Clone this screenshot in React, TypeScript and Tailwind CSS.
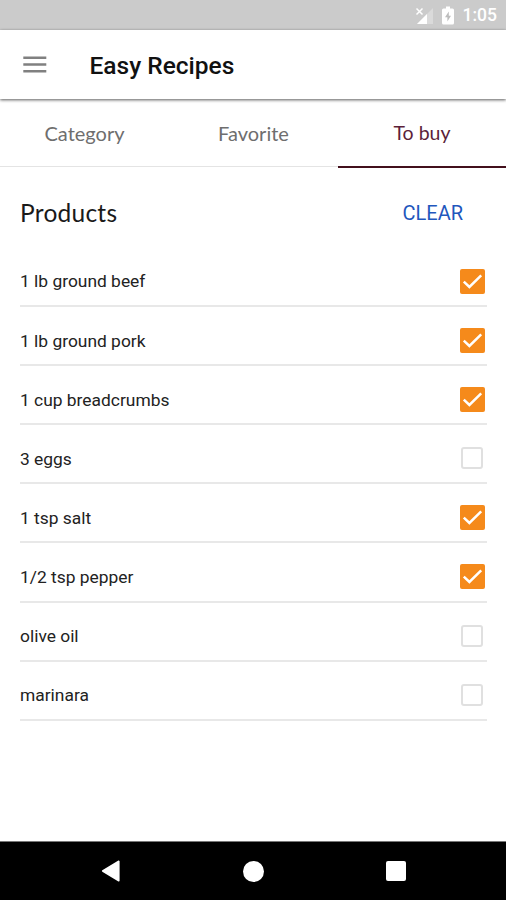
import { useState } from "react";

type Product = { name: string; checked: boolean };

const TABS = ["Category", "Favorite", "To buy"];

const PRODUCTS: Product[] = [
  { name: "1 lb ground beef", checked: true },
  { name: "1 lb ground pork", checked: true },
  { name: "1 cup breadcrumbs", checked: true },
  { name: "3 eggs", checked: false },
  { name: "1 tsp salt", checked: true },
  { name: "1/2 tsp pepper", checked: true },
  { name: "olive oil", checked: false },
  { name: "marinara", checked: false },
];

function StatusBar() {
  return (
    <div className="flex h-[30px] shrink-0 items-center justify-end bg-[#cbcbcb] pt-px pr-[9px] text-white">
      <svg width="19" height="18" viewBox="0 0 19 18" className="mr-2">
        <path d="M18 1V17H2Z" fill="currentColor" opacity="0.3" />
        <path d="M12 7V17H2Z" fill="currentColor" />
        <path d="M1.5 1.5L7.5 7.5M7.5 1.5L1.5 7.5" stroke="currentColor" strokeWidth="1.5" />
      </svg>
      <svg width="12" height="19" viewBox="0 0 12 19" className="mr-[9px]">
        <path d="M4 0.5H8V2.5H10.5Q12 2.5 12 4V17Q12 18.5 10.5 18.5H1.5Q0 18.5 0 17V4Q0 2.5 1.5 2.5H4Z" fill="currentColor" />
        <path d="M6.8 5.5L3 11.3H5.4V15.5L9 9.7H6.8Z" fill="#bdbdbd" />
      </svg>
      <span className="text-[17.5px] leading-[29px] font-medium">1:05</span>
    </div>
  );
}

function Checkbox({ checked }: { checked: boolean }) {
  if (!checked) {
    return <span className="mr-[2px] block h-[22px] w-[22px] rounded-[3px] border-2 border-[#e0e0e0]" />;
  }
  return (
    <span className="block h-[25px] w-[25px] rounded-[2px] bg-[#f58a1b]">
      <svg width="25" height="25" viewBox="0 0 25 25" fill="none">
        <path d="M3.8 12.6L9.4 18L21.2 6.3" stroke="white" strokeWidth="2.5" />
      </svg>
    </span>
  );
}

export default function App() {
  const [products, setProducts] = useState(PRODUCTS);

  const toggle = (index: number) =>
    setProducts((list) => list.map((p, i) => (i === index ? { ...p, checked: !p.checked } : p)));

  return (
    <div className="flex h-[900px] w-[506px] flex-col overflow-hidden bg-white font-['Roboto',sans-serif]">
      <StatusBar />

      {/* App bar */}
      <header className="z-10 flex h-[69px] shrink-0 items-center bg-white pl-[23px] shadow-[0_1px_3px_rgba(0,0,0,0.65)]">
        <button aria-label="Menu">
          <svg width="24" height="17" viewBox="0 0 24 17" className="mb-px">
            <path d="M0.3 1.7H23.3M0.3 8.5H23.3M0.3 15.3H23.3" stroke="#808080" strokeWidth="2.4" />
          </svg>
        </button>
        <h1 className="ml-[42.5px] pt-[2px] text-[24.5px] leading-8 font-medium text-[#111]">Easy Recipes</h1>
      </header>

      {/* Tabs */}
      <nav className="grid h-[69px] shrink-0 grid-cols-[169px_169px_168px] font-['Lato',sans-serif] text-xl">
        {TABS.map((tab) => (
          <button
            key={tab}
            className={
              tab === "To buy"
                ? "border-b-2 border-[#43101c] pt-px text-[19.5px] text-[#5c1f3a]"
                : "mb-px border-b-[1.5px] border-[#e4e4e4] text-[#6e6e6e]"
            }
          >
            {tab}
          </button>
        ))}
      </nav>

      <main className="flex-1 pr-[19px] pl-5">
        <div className="flex h-20 items-center justify-between pt-[10px] pr-6">
          <h2 className="pb-px font-['Lato',sans-serif] text-[24.5px] leading-8 tracking-[0.25px] text-[#1a1a1a]">Products</h2>
          <button
            className="text-xl text-[#1f57bd]"
            onClick={() => setProducts((list) => list.filter((p) => !p.checked))}
          >
            CLEAR
          </button>
        </div>

        <ul>
          {products.map((p, i) => (
            <li
              key={p.name}
              className="flex h-[59.1px] items-center justify-between border-b-2 border-[#e8e8e8] pt-[9px] pr-[2px]"
              onClick={() => toggle(i)}
            >
              <span className="pt-px text-[17.4px] text-[#222]">{p.name}</span>
              <Checkbox checked={p.checked} />
            </li>
          ))}
        </ul>
      </main>

      {/* System navigation */}
      <footer className="flex h-[59px] shrink-0 items-center justify-between border-t border-[#777] bg-black pr-[100px] pl-[101px]">
        <svg width="19" height="22" viewBox="0 0 19 22" fill="white">
          <path d="M17.8 1.3V20.7L1.7 11Z" stroke="white" strokeWidth="1.6" strokeLinejoin="round" />
        </svg>
        <span className="h-[21px] w-[21px] rounded-full bg-white" />
        <span className="h-5 w-5 rounded-[2px] bg-white" />
      </footer>
    </div>
  );
}
